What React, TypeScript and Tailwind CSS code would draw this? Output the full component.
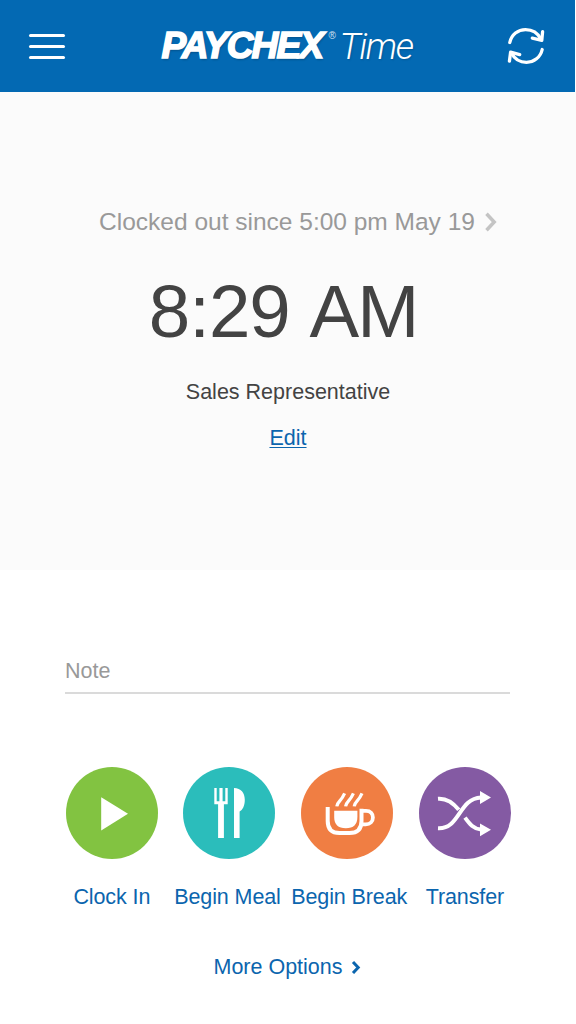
import React from "react";

const actions = [
  { name: "Clock In", color: "bg-[#82c341]", circle: "", label: "", icon: <PlayIcon /> },
  { name: "Begin Meal", color: "bg-[#2bbdbb]", circle: "-ml-[2px]", label: "-ml-[4px]", icon: <MealIcon /> },
  { name: "Begin Break", color: "bg-[#f07e43]", circle: "-ml-px", label: "ml-[4px]", icon: <BreakIcon /> },
  { name: "Transfer", color: "bg-[#845aa3]", circle: "", label: "", icon: <TransferIcon /> },
];

function PlayIcon() {
  return (
    <svg viewBox="0 0 92 92" className="size-full" fill="#fff">
      <path d="M35.2 30.2L62 46.7L35.2 63.4Z" />
    </svg>
  );
}

function MealIcon() {
  return (
    <svg viewBox="0 0 92 92" className="size-full" fill="#fff">
      <path d="M31.3 21h2.4v13.2h2.7V21h3.2v13.2h2.7V21h2.4v16.3h-3.8V71h-5.8V37.3h-3.8Z" />
      <path d="M51 21C58 21 61.8 26 61.8 32.8C61.8 39 59.5 43 56.6 44.6V71H51Z" />
    </svg>
  );
}

function BreakIcon() {
  return (
    <svg viewBox="0 0 92 92" className="size-full" fill="none" stroke="#fff">
      <path
        d="M26.7 40V54Q26.7 66 38.5 66H48.5Q60.5 66 60.5 54V41.7"
        strokeWidth="4"
      />
      <path d="M60.5 43.9H65C69.6 43.9 71.9 46.8 71.9 50.5C71.9 54.6 69 57.4 64.8 57.4H60" strokeWidth="3.8" />
      <path d="M33.2 43.8H56.4V50C56.4 57.5 52.5 61.2 44.8 61.2S33.2 57.5 33.2 50Z" fill="#fff" stroke="none" />
      <path
        d="M35.8 39.3Q36 36.8 38.8 33.8T43.6 26.3M44.6 39.3Q44.8 36.8 47.6 33.8T52.4 26.3M53.2 39.3Q53.4 36.8 56.2 33.8T61 26.3"
        strokeWidth="3.2"
      />
    </svg>
  );
}

function TransferIcon() {
  return (
    <svg viewBox="0 0 92 92" className="size-full" fill="none" stroke="#fff" strokeWidth="4">
      <path d="M19 31.7C28 31 34 35.5 39.8 42.8M46 50.7C50.5 57 54.5 61.8 62 62.6" />
      <path d="M19 61.3C41 62.5 39.5 31.5 62 30.5" />
      <path d="M61 24L72 30.4L61 37ZM61 56.4L72 62.7L61 69.2Z" fill="#fff" stroke="none" />
    </svg>
  );
}

function RefreshIcon() {
  return (
    <svg
      viewBox="0 0 40 40"
      className="size-10"
      fill="none"
      stroke="#fff"
      strokeWidth="3.3"
      strokeLinecap="round"
      strokeLinejoin="round"
    >
      <path d="M3.8 16.5C5.5 8.5 12 3.6 19.5 3.6C26.5 3.6 32 7.5 34.8 13" />
      <path d="M36.6 5.6L35.8 14.3L26.3 12.2" />
      <path d="M36.2 23.5C34.5 31.3 28 36.3 20.5 36.3C14 36.3 8.6 33 5.6 27.2" />
      <path d="M3.4 35.2L4.6 26.2L13.7 28.6" />
    </svg>
  );
}

export default function App() {
  return (
    <main className="flex h-[1024px] w-[576px] flex-col overflow-hidden bg-white font-['Liberation_Sans',Arial,sans-serif] text-[21.5px] leading-6">
      {/* Header */}
      <header className="mr-px flex h-[92px] shrink-0 items-center justify-between bg-[#0369b3] pr-[29px] pl-[29px] text-white">
        <button className="flex w-9 flex-col gap-2" aria-label="Menu">
          <span className="h-[3px] rounded-full bg-white" />
          <span className="h-[3px] rounded-full bg-white" />
          <span className="h-[3px] rounded-full bg-white" />
        </button>
        <div className="flex h-10 w-[256px] items-center pl-[4px] whitespace-nowrap italic">
          <span className="w-[167px] text-[37px] leading-10 font-black tracking-[-1.8px] [-webkit-text-stroke:1.6px_white] [text-shadow:1px_2px_2px_rgba(0,0,0,0.2)]">
            PAYCHEX
          </span>
          <span className="w-[11px] -translate-y-2.5 text-[10px] leading-3 not-italic opacity-80">®</span>
          <span className="pt-px font-['Roboto'] text-[36.5px] leading-10 font-light tracking-[-1.4px] [text-shadow:1px_1px_2px_rgba(0,0,0,0.15)]">
            Time
          </span>
        </div>
        <button aria-label="Refresh">
          <RefreshIcon />
        </button>
      </header>

      {/* Current status */}
      <section className="flex h-[478px] shrink-0 flex-col items-center bg-[#fbfbfb] pt-[116px] text-[#434343]">
        <div className="flex items-center gap-2.5 pl-[20px] text-[24.5px] leading-7 whitespace-nowrap text-[#999]">
          Clocked out since 5:00 pm May 19
          <svg viewBox="0 0 12 20" className="h-5 w-3" fill="none" stroke="#c4c4c4" strokeWidth="3.5">
            <path d="M1.5 1.8L9.2 10L1.5 18.2" />
          </svg>
        </div>
        <h1 className="mt-9 -ml-[10px] text-[74.5px] leading-20 whitespace-nowrap">
          <span className="tracking-[-1px]">8:29 </span>
          <span className="tracking-[-2px]">AM</span>
        </h1>
        <p className="mt-7">Sales Representative</p>
        <a className="mt-[22px] text-[#0b65ae] underline decoration-1 underline-offset-2" href="#">
          Edit
        </a>
      </section>

      {/* Note field */}
      <div className="mt-[89px] mr-[66px] ml-[65px] h-[35px] shrink-0 border-b-2 border-[#dadada] text-[#999]">
        Note
      </div>

      {/* Actions */}
      <div className="mt-[73px] ml-[53px] flex shrink-0">
        {actions.map((item) => (
          <button
            key={item.name}
            className="flex w-[117.7px] flex-col items-center tracking-[-0.1px] text-[#0b65ae]"
          >
            <span className={`size-[92px] rounded-full ${item.color} ${item.circle}`}>{item.icon}</span>
            <span className={`mt-[26px] whitespace-nowrap ${item.label}`}>{item.name}</span>
          </button>
        ))}
      </div>

      <a className="mt-[46px] -ml-0.5 flex items-center justify-center gap-2 text-[#0b65ae]" href="#">
        More Options
        <svg viewBox="0 0 10 14" className="h-3.5 w-2.5" fill="none" stroke="currentColor" strokeWidth="3">
          <path d="M2 2L7.2 7.5L2 13" />
        </svg>
      </a>
    </main>
  );
}
